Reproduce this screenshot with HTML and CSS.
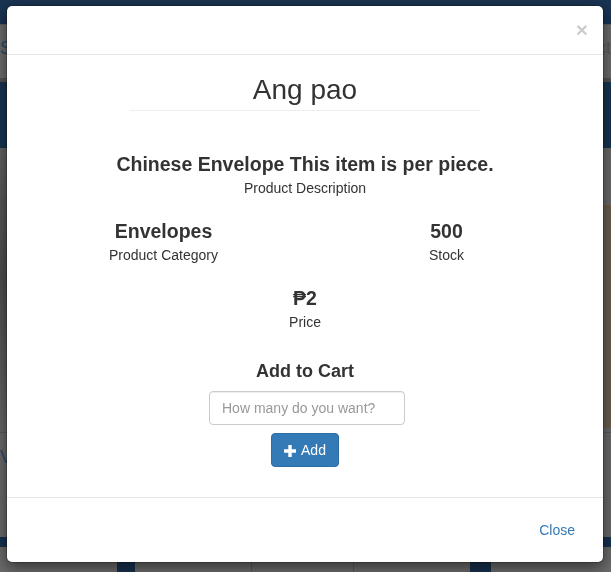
FILE: index.html
```html
<!DOCTYPE html>
<html>
<head>
<meta charset="utf-8">
<link rel="stylesheet" href="styles.css">
</head>
<body>
<div class="bg">
  <div class="bg-nav"></div>
  <div class="bg-sub"><span class="bg-s">S</span><span class="bg-ct">ct</span></div>
  <div class="bg-banner"></div>
  <div class="bg-main">
    <div class="bg-left"></div>
    <div class="bg-mid"></div>
    <div class="bg-right"><div class="bg-brown"></div></div>
  </div>
  <div class="bg-lower"><span class="bg-v">V</span></div>
  <div class="bg-navyrow"></div>
  <div class="bg-foot">
    <div class="bf bf-a"></div>
    <div class="bf bf-b"></div>
    <div class="bf bf-c"></div>
    <div class="bf bf-d"></div>
    <div class="bf bf-e"></div>
  </div>
</div>

<div class="modal">
  <div class="modal-content">
    <div class="modal-header">
      <button class="close" type="button">&times;</button>
    </div>
    <div class="modal-body">
      <h2 class="title">Ang pao</h2>
      <hr class="title-rule">
      <div class="field desc">
        <div class="value">Chinese Envelope This item is per piece.</div>
        <div class="label">Product Description</div>
      </div>
      <div class="pair">
        <div class="field">
          <div class="value">Envelopes</div>
          <div class="label">Product Category</div>
        </div>
        <div class="field">
          <div class="value">500</div>
          <div class="label">Stock</div>
        </div>
      </div>
      <div class="field price">
        <div class="value">₱2</div>
        <div class="label">Price</div>
      </div>
      <div class="cart">
        <h4 class="cart-title">Add to Cart</h4>
        <input class="qty" type="text" placeholder="How many do you want?">
        <button class="btn-add" type="button"><svg class="plus" viewBox="0 0 12 12" width="12" height="12"><path d="M4.3 0h3.4v4.3H12v3.4H7.7V12H4.3V7.7H0V4.3h4.3z" fill="#fff"/></svg><span>Add</span></button>
      </div>
    </div>
    <div class="modal-footer">
      <button class="btn-link" type="button">Close</button>
    </div>
  </div>
</div>
</body>
</html>
```

FILE: styles.css
```css
* { box-sizing: border-box; }
html, body { margin: 0; padding: 0; }
body {
  font-family: "Liberation Sans", Arial, sans-serif;
  font-size: 14px;
  line-height: 1.42857;
  color: #333;
  overflow: hidden;
  width: 611px;
  height: 572px;
}

/* dimmed page behind the modal */
.bg {
  height: 572px;
  display: flex;
  flex-direction: column;
  background: #676767;
}
.bg-nav { height: 24px; background: #1a3452; }
.bg-sub {
  height: 58px;
  background: #6d6d6d;
  border-top: 1px solid #5d5d5d;
  border-bottom: 4px solid #545454;
  display: flex;
  justify-content: space-between;
  align-items: center;
  font-size: 18px;
  color: #2a4a6a;
  padding-bottom: 6px;
}
.bg-s { margin-left: 0; }
.bg-ct { margin-right: 0; color: #5a5a5a; }
.bg-banner { height: 66px; background: #173452; }
.bg-main {
  height: 284px;
  display: grid;
  grid-template-columns: 20px 1fr 20px;
}
.bg-left { background: linear-gradient(180deg, #646464 0%, #585858 20%, #4f4f4f 45%, #5e5e5e 80%, #686868 100%); }
.bg-mid { background: #666; }
.bg-right { background: #6a6a6a; padding-top: 56px; }
.bg-brown {
  height: 224px;
  background: #6b604f;
  border-top: 1px solid #7a6a50;
}
.bg-lower {
  height: 105px;
  background: #6a6a6a;
  border-top: 1px solid #5a5a5a;
  padding: 14px 0 0 0;
  font-size: 18px;
  line-height: 1.2;
  color: #2a4a6a;
}
.bg-navyrow { height: 10px; background: #17324f; }
.bg-foot {
  flex: 1;
  display: flex;
  background: #6c6c6c;
}
.bf-a { width: 117px; }
.bf-b { width: 18px; background: #17324f; }
.bf-c { width: 117px; border-right: 1px solid #4a5a78; }
.bf-d { width: 102px; border-right: 1px solid #4a5a78; margin-right: 116px; }
.bf-e { width: 21px; background: #17324f; }

/* modal */
.modal {
  position: fixed;
  top: 0;
  left: 0;
  width: 611px;
  height: 572px;
  padding: 5px 7px 0 6px;
}
.modal-content {
  background: #fff;
  border: 1px solid rgba(0, 0, 0, 0.2);
  border-radius: 6px;
  box-shadow: 0 5px 15px rgba(0, 0, 0, 0.5);
  background-clip: padding-box;
}
.modal-header {
  height: 49px;
  padding: 15px;
  border-bottom: 1px solid #e5e5e5;
  display: flex;
  justify-content: flex-end;
  align-items: flex-start;
}
.close {
  padding: 0;
  margin-top: -2px;
  background: transparent;
  border: 0;
  font-family: "Liberation Sans", Arial, sans-serif;
  font-size: 21px;
  font-weight: bold;
  line-height: 1;
  color: #000;
  opacity: 0.2;
}

.modal-body {
  padding: 16px 15px 30px;
  text-align: center;
}
.title {
  margin: 0;
  font-size: 28px;
  font-weight: normal;
  line-height: 38px;
  color: #333;
}
.title-rule {
  width: 350px;
  margin: 1px auto 0;
  border: 0;
  border-top: 1px solid #eee;
  height: 0;
}
.field .value {
  font-size: 19.5px;
  font-weight: bold;
  line-height: 22px;
}
.field .label {
  margin-top: 3px;
  line-height: 20px;
}
.desc { margin-top: 42px; }
.pair {
  margin-top: 22px;
  display: grid;
  grid-template-columns: 1fr 1fr;
}
.price { margin-top: 22px; }
.cart {
  margin-top: 28px;
  display: flex;
  flex-direction: column;
  align-items: center;
}
.cart-title {
  margin: 0;
  font-size: 18px;
  font-weight: bold;
  line-height: 22px;
}
.qty {
  margin: 9px 0 0 4px;
  width: 196px;
  height: 34px;
  padding: 6px 12px;
  border: 1px solid #ccc;
  border-radius: 4px;
  font-family: "Liberation Sans", Arial, sans-serif;
  font-size: 14px;
  color: #555;
  box-shadow: inset 0 1px 1px rgba(0, 0, 0, 0.075);
}
.qty::placeholder { color: #999; }
.btn-add {
  margin-top: 8px;
  height: 34px;
  padding: 6px 12px;
  display: flex;
  align-items: center;
  gap: 5px;
  background: #337ab7;
  border: 1px solid #2e6da4;
  border-radius: 4px;
  color: #fff;
  font-family: "Liberation Sans", Arial, sans-serif;
  font-size: 14px;
  line-height: 20px;
}
.plus { display: block; margin-top: 1px; }

.modal-footer {
  padding: 15px;
  border-top: 1px solid #e5e5e5;
  display: flex;
  justify-content: flex-end;
}
.btn-link {
  height: 34px;
  padding: 6px 12px;
  background: transparent;
  border: 1px solid transparent;
  color: #337ab7;
  font-family: "Liberation Sans", Arial, sans-serif;
  font-size: 14px;
  line-height: 20px;
}
```
